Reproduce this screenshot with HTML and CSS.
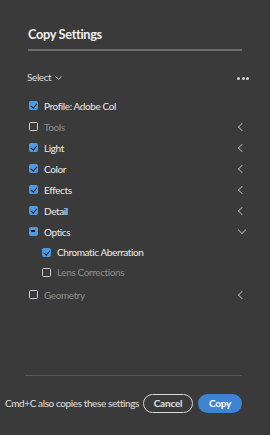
FILE: index.html
```html
<!DOCTYPE html>
<html lang="en">
<head>
    <meta charset="UTF-8">
    <meta name="viewport" content="width=device-width, initial-scale=1.0">
    <title>Copy Settings</title>
    <link rel="stylesheet" href="styles.css">
</head>
<body>
    <div class="dialog">
        <h1 class="title">Copy Settings</h1>
        <div class="rule"></div>
        <div class="toolbar">
            <span class="select">Select
                <svg width="7" height="4" viewBox="0 0 7 4"><path d="M0.5 0.5 L3.5 3.3 L6.5 0.5" fill="none" stroke="#cfcfcf" stroke-width="1"/></svg>
            </span>
            <span class="more"><i></i><i></i><i></i></span>
        </div>
        <ul class="list">
            <li class="row">
                <span class="box on"></span><span class="label">Profile: Adobe Col</span>
            </li>
            <li class="row">
                <span class="box"></span><span class="label dim">Tools</span>
                <span class="chev"></span>
            </li>
            <li class="row">
                <span class="box on"></span><span class="label">Light</span>
                <span class="chev"></span>
            </li>
            <li class="row">
                <span class="box on"></span><span class="label">Color</span>
                <span class="chev"></span>
            </li>
            <li class="row">
                <span class="box on"></span><span class="label">Effects</span>
                <span class="chev"></span>
            </li>
            <li class="row">
                <span class="box on"></span><span class="label">Detail</span>
                <span class="chev"></span>
            </li>
            <li class="row">
                <span class="box mixed"></span><span class="label">Optics</span>
                <span class="chev down"></span>
            </li>
            <li class="row sub">
                <span class="box on"></span><span class="label">Chromatic Aberration</span>
            </li>
            <li class="row sub">
                <span class="box"></span><span class="label dim">Lens Corrections</span>
            </li>
            <li class="row last">
                <span class="box"></span><span class="label dim">Geometry</span>
                <span class="chev"></span>
            </li>
        </ul>
        <div class="spacer"></div>
        <div class="rule bottom"></div>
        <div class="footer">
            <span class="hint">Cmd+C also copies these settings</span>
            <button class="btn cancel">Cancel</button>
            <button class="btn copy">Copy</button>
        </div>
    </div>
</body>
</html>
```

FILE: styles.css
```css
*{
    margin:0;
    padding:0;
    box-sizing:border-box;
}
body{
    background:#3a3a3a;
    font-family:Lato,"Open Sans",sans-serif;
    color:#e6e6e6;
    letter-spacing:-0.4px;
}
.dialog{
    height:435px;
    display:flex;
    flex-direction:column;
    padding:25px 28px 0 28px;
}
.title{
    font-size:12.8px;
    font-weight:700;
    line-height:18px;
    color:#f0f0f0;
    letter-spacing:-0.35px;
}
.rule{
    height:2px;
    background:#6c6c6c;
    margin-top:6px;
}
.toolbar{
    display:flex;
    align-items:center;
    justify-content:space-between;
    margin-top:19px;
    height:14px;
}
.select{
    font-size:10px;
    color:#dcdcdc;
    display:flex;
    align-items:center;
    gap:4px;
    margin-left:-1px;
}
.select svg{margin-top:1px;}
.more{
    display:flex;
    gap:1.5px;
    margin-right:-7px;
    margin-top:2px;
}
.more i{
    width:3px;
    height:3px;
    border-radius:50%;
    background:#d0d0d0;
}
.list{
    list-style:none;
    margin-top:11px;
}
.row{
    display:flex;
    align-items:center;
    height:21px;
    font-size:10px;
}
.row.sub{
    height:20px;
    padding-left:13px;
}
.row.last{
    margin-top:2px;
}
.box{
    width:9px;
    height:9px;
    border:1.5px solid #cfcfcf;
    border-radius:1.5px;
    margin-left:1px;
    margin-right:6px;
    position:relative;
    flex:none;
}
.box.on,.box.mixed{
    background:#4b9be6;
    border-color:#4b9be6;
}
.box.on::after{
    content:"";
    position:absolute;
    left:1.6px;
    top:0;
    width:2.5px;
    height:4.8px;
    border:solid #1e1e1e;
    border-width:0 1.4px 1.4px 0;
    transform:rotate(40deg);
}
.box.mixed::after{
    content:"";
    position:absolute;
    left:1px;
    top:2.2px;
    width:4px;
    height:1.5px;
    background:#1e1e1e;
}
.label{
    flex:1;
    color:#ececec;
}
.label.dim{
    color:#8e8e8e;
}
.chev{
    width:6px;
    height:6px;
    border:solid #a0a0a0;
    border-width:0 0 1.4px 1.4px;
    transform:rotate(45deg);
    margin-right:-3px;
}
.chev.down{
    transform:rotate(-45deg);
    margin-top:-4px;
}
.spacer{
    flex:1;
}
.rule.bottom{
    height:1.5px;
    background:#545454;
    margin:0 0 0 -3px;
}
.footer{
    display:flex;
    align-items:center;
    height:59px;
    margin:0 -28px 0 -23px;
    padding-bottom:5px;
}
.hint{
    font-size:10px;
    color:#e0e0e0;
    white-space:nowrap;
    margin-right:4px;
}
.btn{
    font-family:Lato,"Open Sans",sans-serif;
    font-size:10px;
    font-weight:700;
    letter-spacing:-0.2px;
    height:19px;
    border-radius:10px;
    cursor:pointer;
}
.cancel{
    width:50px;
    background:none;
    color:#e0e0e0;
    border:1.5px solid #d8d8d8;
}
.copy{
    width:44px;
    margin-left:5px;
    background:#3f83d3;
    color:#ffffff;
    border:none;
}
```
